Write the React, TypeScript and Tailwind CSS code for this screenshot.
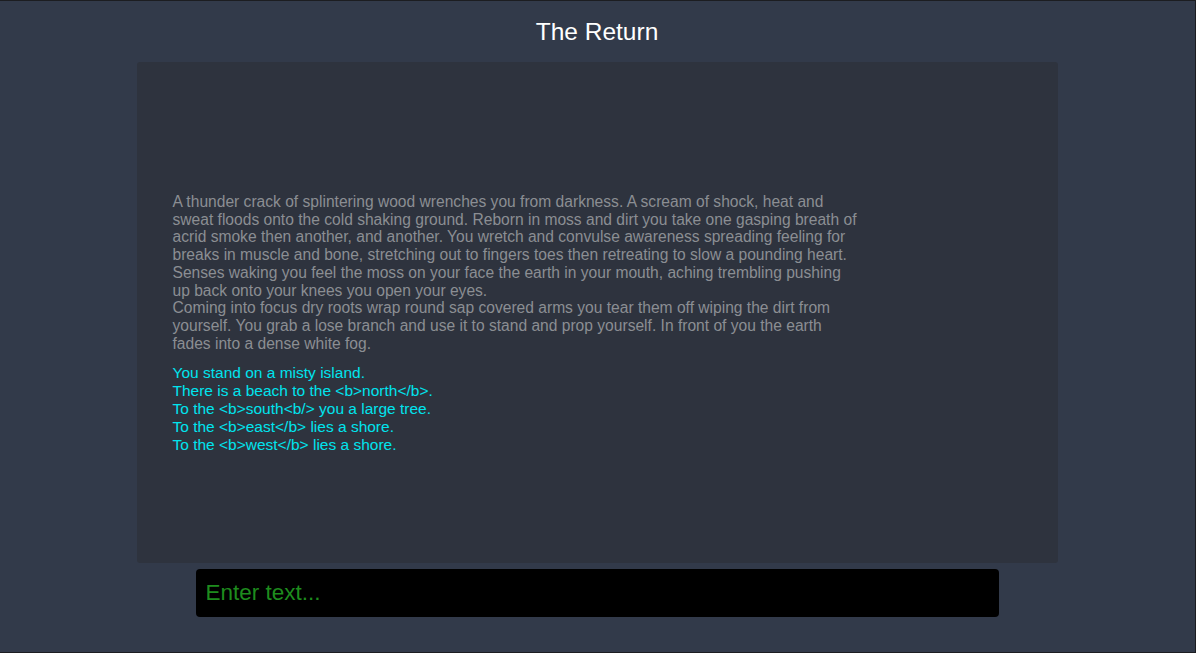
export default function App() {
  const story = [
    "A thunder crack of splintering wood wrenches you from darkness. A scream of shock, heat and sweat floods onto the cold shaking ground. Reborn in moss and dirt you take one gasping breath of acrid smoke then another, and another. You wretch and convulse awareness spreading feeling for breaks in muscle and bone, stretching out to fingers toes then retreating to slow a pounding heart. Senses waking you feel the moss on your face the earth in your mouth, aching trembling pushing up back onto your knees you open your eyes.",
    "Coming into focus dry roots wrap round sap covered arms you tear them off wiping the dirt from yourself. You grab a lose branch and use it to stand and prop yourself. In front of you the earth fades into a dense white fog.",
  ];

  const exits = [
    "You stand on a misty island.",
    "There is a beach to the <b>north</b>.",
    "To the <b>south<b/> you a large tree.",
    "To the <b>east</b> lies a shore.",
    "To the <b>west</b> lies a shore.",
  ];

  return (
    <div className="h-[653px] w-[1196px] overflow-hidden border-t border-r border-b border-[#1c1d21] bg-[#323a4a] font-['Liberation_Sans',Arial,sans-serif]">
      <div className="flex flex-col items-center pr-[1px]">
        <h1 className="h-[61px] pt-[17px] text-[24.5px] leading-[28px] text-white">
          The Return
        </h1>

        <div className="h-[501px] w-[921px] rounded-[3px] bg-[#2e333e] pl-[36px] pt-[131px]">
          <div className="w-[686px] text-[15.6px] leading-[17.7px] text-[#8b8e93]">
            {story.map((p, i) => (
              <p key={i}>{p}</p>
            ))}
          </div>
          <div className="mt-[12px] text-[15.5px] leading-[18px] text-[#00e4ee]">
            {exits.map((line, i) => (
              <p key={i}>{line}</p>
            ))}
          </div>
        </div>

        <div className="mt-[6px] h-[48px] w-[803px] rounded-[4px] bg-black px-[10px]">
          <input
            type="text"
            placeholder="Enter text..."
            className="h-full w-full bg-transparent text-[22.5px] text-[#1e8c1e] outline-none placeholder:text-[#1e8c1e]"
          />
        </div>
      </div>
    </div>
  );
}
